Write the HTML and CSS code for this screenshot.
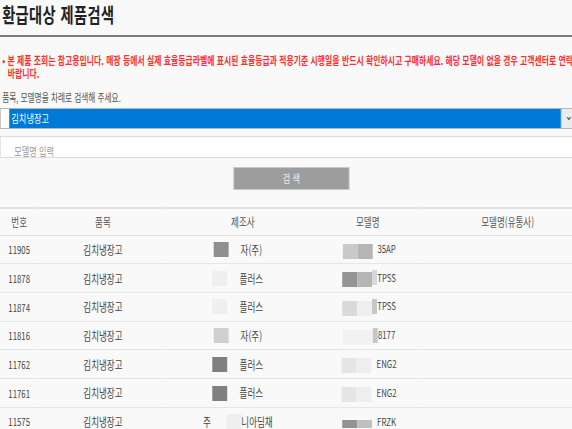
FILE: index.html
```html
<!DOCTYPE html>
<html lang="ko">
<head>
  <meta charset="UTF-8" />
  <meta name="viewport" content="width=device-width, initial-scale=1.0" />
  <title>환급대상 제품검색</title>
  <link rel="stylesheet" href="styles.css">
</head>
<body>
  <div class="page">
    <h1>환급대상 제품검색</h1>

    <p class="notice">• 본 제품 조회는 참고용입니다. 매장 등에서 실제 효율등급라벨에 표시된 효율등급과 적용기준 시행일을 반드시 확인하시고 구매하세요. 해당 모델이 없을 경우 고객센터로 연락 바랍니다.</p>

    <p class="guide">품목, 모델명을 차례로 검색해 주세요.</p>

    <div class="select">
      <span class="select-value">김치냉장고</span>
      <span class="select-arrow">&#8964;</span>
    </div>

    <div class="field"><span class="placeholder">모델명 입력</span></div>

    <div class="actions">
      <button class="search-btn">검색</button>
    </div>

    <table class="result">
      <colgroup>
        <col class="c-no"><col class="c-item"><col class="c-maker"><col class="c-model"><col class="c-model2">
      </colgroup>
      <thead>
        <tr><th>번호</th><th>품목</th><th>제조사</th><th>모델명</th><th>모델명(유통사)</th></tr>
      </thead>
      <tbody>
        <tr>
          <td>11905</td><td>김치냉장고</td>
          <td><span class="px m1"></span><span class="gap"></span>자(주)</td>
          <td><span class="px g1"></span><span class="px g2"></span><span class="tail"></span>35AP</td>
          <td></td>
        </tr>
        <tr>
          <td>11878</td><td>김치냉장고</td>
          <td><span class="px m2"></span><span class="gap"></span>플러스</td>
          <td><span class="px g3"></span><span class="px g2"></span><span class="tail t1"></span>TPSS</td>
          <td></td>
        </tr>
        <tr>
          <td>11874</td><td>김치냉장고</td>
          <td><span class="px m2"></span><span class="gap"></span>플러스</td>
          <td><span class="px g4"></span><span class="px g5"></span><span class="tail t2"></span>TPSS</td>
          <td></td>
        </tr>
        <tr>
          <td>11816</td><td>김치냉장고</td>
          <td><span class="px m3"></span><span class="gap"></span>자(주)</td>
          <td><span class="px g6"></span><span class="px g6"></span><span class="tail t2"></span>8177</td>
          <td></td>
        </tr>
        <tr>
          <td>11762</td><td>김치냉장고</td>
          <td><span class="px m1 dark"></span><span class="gap"></span>플러스</td>
          <td><span class="px g7"></span><span class="px g5"></span><span class="tail"></span>ENG2</td>
          <td></td>
        </tr>
        <tr>
          <td>11761</td><td>김치냉장고</td>
          <td><span class="px m1 dark"></span><span class="gap"></span>플러스</td>
          <td><span class="px g7"></span><span class="px g5"></span><span class="tail"></span>ENG2</td>
          <td></td>
        </tr>
        <tr>
          <td>11575</td><td>김치냉장고</td>
          <td>주<span class="gap wide"></span><span class="px m2"></span>니아딤채</td>
          <td><span class="px g3 short"></span><span class="px g8 short"></span><span class="tail"></span>FRZK</td>
          <td></td>
        </tr>
      </tbody>
    </table>
  </div>
</body>
</html>
```

FILE: styles.css
```css
html, body { margin: 0; padding: 0; overflow: hidden; background: #f9f9f9; }
body { font-family: "Noto Sans CJK KR", "Noto Sans", sans-serif; color: #444; }

/* the whole page is drawn narrow, like the original capture */
.page { width: 815px; padding-left: 3px; transform: scaleX(0.71); transform-origin: 0 0; }

h1 { margin: 0 0 0 -3px; padding: 0 0 5px 3px; font-size: 20px; line-height: 30px; font-weight: 700; color: #222; letter-spacing: 0.6px; border-bottom: 2px solid #7a7a7a; }

.notice { margin: 17px 0 0; padding-left: 8px; text-indent: -8px; font-size: 11px; line-height: 13px; font-weight: 700; color: #ff2d2d; letter-spacing: 0.1px; }
.guide { margin: 10px 0 0; font-size: 10.8px; line-height: 14px; color: #555; }

.select { display: flex; width: 812px; height: 21px; margin: 4px 0 0 -3px; border: 1px solid #b5b5b5; background: #fff; box-sizing: border-box; }
.select-value { flex: 1; margin-left: 12px; background: #0078d7; color: #fff; font-size: 11.5px; line-height: 19px; padding-left: 3px; }
.select-arrow { width: 20px; background: #ececec; border-left: 1px solid #b5b5b5; font-size: 13px; line-height: 11px; text-align: center; color: #333; }

.field { height: 22px; margin: 7px 0 0 -3px; border: 1px solid #dcdcdc; background: #fff; box-sizing: border-box; padding-left: 19px; }
.placeholder { font-size: 11.5px; line-height: 20px; color: #999; }

.actions { margin-top: 6px; text-align: center; }
.search-btn { width: 163px; height: 23px; border: 1px solid #c8c8c8; background: #9d9d9d; color: #eee; font-family: inherit; font-size: 11.5px; letter-spacing: 3px; padding: 0 0 0 3px; }

.result { margin: 17px 0 0 -3px; width: 842px; border-collapse: collapse; table-layout: fixed; border-top: 2px solid #e2e2e2; font-size: 12px; }
.c-no { width: 54px; }
.c-item { width: 182px; }
.c-maker { width: 212px; }
.c-model { width: 140px; }
.c-model2 { width: 254px; }
.result th { height: 26px; padding: 0; font-weight: 400; color: #555; border-bottom: 1px solid #e0e0e0; }
.result td { height: 27.7px; padding: 0; text-align: center; color: #444; border-bottom: 1px solid #e6e6e6; white-space: nowrap; }
.result td:nth-child(1) { font-size: 11px; }
.result td:nth-child(3) { padding-right: 14px; }
.result td:nth-child(4) { padding-left: 4px; font-size: 11px; }

/* blurred-out parts of the names */
.px { display: inline-block; width: 21px; height: 15px; vertical-align: middle; margin-top: -4px; }
.px.short { height: 8px; margin-top: 2px; }
.gap { display: inline-block; width: 17px; }
.gap.wide { width: 22px; }
.tail { display: inline-block; width: 7px; height: 15px; vertical-align: middle; margin-top: -2px; }
.m1 { background: #8f8f8f; }
.m1.dark { background: #808080; }
.m2 { background: #efefef; }
.m3 { background: #cfcfcf; }
.g1 { background: #c9c9c9; margin-top: 2px; }
.g2 { background: #b5b5b5; margin-top: 2px; }
.g3 { background: #939393; margin-top: 2px; }
.g4 { background: #dadada; margin-top: 2px; }
.g5 { background: #eeeeee; margin-top: 2px; }
.g6 { background: #f2f2f2; margin-top: 2px; }
.g7 { background: #e5e5e5; margin-top: 2px; }
.g8 { background: #c0c0c0; }
.t1 { background: #d8d8d8; }
.t2 { background: #c6c6c6; }
```
